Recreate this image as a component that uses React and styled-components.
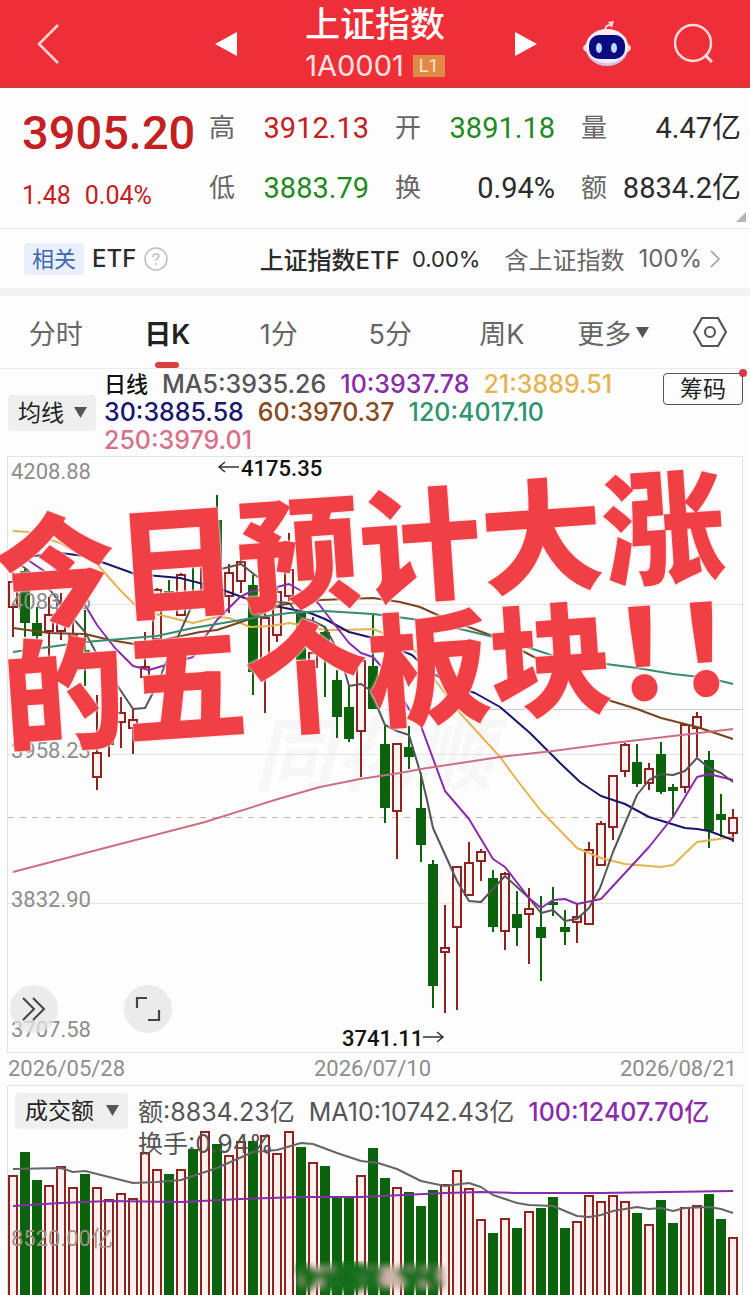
import React from 'react';
import styled, { createGlobalStyle } from 'styled-components';

const RED = '#8f2320';
const GREEN = '#0b640b';

const NUM = 'Roboto, "Noto Sans CJK SC", sans-serif';
const UI = 'Inter, "Noto Sans CJK SC", sans-serif';

const GlobalStyle = createGlobalStyle`
  * { box-sizing: border-box; }
  body {
    margin: 0;
    background: #fdfdfd;
    color: #2b2b2b;
    font-family: ${UI};
  }
  button, select {
    font: inherit;
    color: inherit;
    border: 0;
    background: none;
    padding: 0;
    margin: 0;
  }
  svg { display: block; }
`;

const Page = styled.main`
  width: 100%;
  overflow: hidden;
`;

const Header = styled.header`
  display: grid;
  grid-template-columns: 1fr 324px 1fr;
  align-items: center;
  height: 88px;
  background: #ef2f37;
  color: #fff;
  border-bottom: 1px solid #b8444a;
`;

const HeaderSide = styled.div`
  display: flex;
  align-items: center;
  justify-content: ${({ $end }) => ($end ? 'flex-end' : 'flex-start')};
  gap: 42px;
  padding: 0 34px;
`;

const Switcher = styled.div`
  display: flex;
  align-items: center;
  justify-content: space-between;
`;

const IconButton = styled.button`
  display: flex;
`;

const TitleBlock = styled.div`
  display: flex;
  flex-direction: column;
  align-items: center;
`;

const Title = styled.h1`
  margin: 0;
  font-size: 35px;
  font-weight: 500;
  line-height: 44px;
`;

const Code = styled.div`
  display: flex;
  align-items: center;
  gap: 9px;
  height: 40px;
  font-size: 29px;
  color: #ffe3e3;
`;

const Level = styled.span`
  width: 32px;
  height: 22px;
  background: #e08a46;
  color: #ffe9c9;
  font-family: ${NUM};
  font-size: 18px;
  line-height: 22px;
  text-align: center;
`;

const Quote = styled.section`
  position: relative;
  display: flex;
  height: 141px;
  padding: 10px 9px 10px 22px;
  border-bottom: 1px solid #ebebeb;
  font-family: ${NUM};
`;

const Price = styled.div`
  width: 187px;
  color: #c3201f;
`;

const Last = styled.div`
  height: 70px;
  font-size: 47px;
  font-weight: 500;
  line-height: 70px;
`;

const Change = styled.div`
  display: flex;
  gap: 14px;
  font-size: 25px;
  line-height: 56px;
`;

const Stats = styled.dl`
  flex: 1;
  display: grid;
  grid-template-columns: repeat(3, 160px);
  justify-content: space-between;
  margin: 0;
`;

const Stat = styled.div`
  display: flex;
  justify-content: space-between;
  align-items: center;
  height: 60px;
  white-space: nowrap;

  dt {
    font-size: 26px;
    line-height: 60px;
    color: #666;
  }
  dd {
    margin: 0;
    font-size: 29px;
    line-height: 58px;
    color: ${({ $color }) => $color};
  }
`;

const Corner = styled.span`
  position: absolute;
  right: 4px;
  bottom: 6px;
  border: solid transparent;
  border-width: 5px;
  border-right-color: #b5b5b5;
  border-bottom-color: #b5b5b5;
`;

const EtfBar = styled.a`
  display: flex;
  align-items: center;
  gap: 8px;
  height: 59px;
  padding: 0 30px 0 24px;
  color: #2b2b2b;
  font-size: 22px;
  text-decoration: none;
  white-space: nowrap;
`;

const Tag = styled.span`
  width: 60px;
  border-radius: 4px;
  background: #e9effb;
  color: #3d68ae;
  line-height: 32px;
  text-align: center;
`;

const EtfName = styled.strong`
  font-weight: 500;
  font-size: 24px;
`;

const Tail = styled.span`
  display: flex;
  align-items: center;
  gap: 12px;
  margin-left: auto;
`;

const Included = styled.span`
  display: flex;
  align-items: center;
  gap: 14px;
  margin-left: 12px;
  color: #666;
  font-size: 24px;
`;

const Divider = styled.div`
  height: 8px;
  background: #f3f3f3;
`;

const Tabs = styled.nav`
  display: grid;
  grid-template-columns: repeat(6, 1fr) 81px;
  height: 73px;
  border-bottom: 1px solid #ececec;
`;

const Tab = styled.button`
  position: relative;
  display: flex;
  align-items: center;
  justify-content: center;
  gap: 5px;
  font-size: 27px;
  font-weight: ${({ $active }) => ($active ? 600 : 400)};
  color: ${({ $active }) => ($active ? '#222' : '#666')};

  &::after {
    content: '';
    display: ${({ $active }) => ($active ? 'block' : 'none')};
    position: absolute;
    bottom: 0;
    width: 24px;
    height: 6px;
    border-radius: 3px;
    background: #d8403f;
  }
`;

const Indicators = styled.section`
  display: flex;
  align-items: flex-start;
  height: 87px;
  padding: 1px 7px 0 8px;
`;

const SelectBox = styled.label`
  position: relative;
  flex: none;
  width: ${({ $width }) => $width}px;
  height: 36px;
  margin-top: ${({ $top }) => $top}px;
  border-radius: 4px;
  background: #efefef;

  select {
    width: 100%;
    height: 36px;
    padding-left: 10px;
    appearance: none;
    font-size: 23px;
    color: #222;
  }
  svg {
    position: absolute;
    right: 9px;
    top: 12px;
    pointer-events: none;
  }
`;

const Legend = styled.div`
  flex: 1;
  display: flex;
  flex-wrap: wrap;
  column-gap: 14px;
  margin: 0 8px;
  font-size: 25px;
  font-weight: 500;
  line-height: 28px;
`;

const LegendItem = styled.span`
  color: ${({ $color }) => $color};
  font-weight: ${({ $strong }) => ($strong ? 500 : 'inherit')};
  white-space: nowrap;
`;

const LegendTitle = styled.strong`
  color: #111;
  font-size: 22px;
  font-weight: 500;
`;

const ChipsButton = styled.button`
  position: relative;
  width: 80px;
  height: 32px;
  margin-top: 3px;
  border: 1px solid #555;
  border-radius: 4px;
  color: #222;
  font-size: 23px;
  line-height: 28px;

  &::after {
    content: '';
    position: absolute;
    top: -5px;
    right: -5px;
    width: 8px;
    height: 8px;
    border-radius: 50%;
    background: #d23b48;
  }
`;

const Panel = styled.section`
  position: relative;
  margin: 0 7px;

  > svg {
    width: 100%;
    height: auto;
  }
`;

const Headline = styled.div`
  position: absolute;
  left: -10px;
  top: 24px;
  color: #f04045;
  font-family: "Noto Sans CJK SC", sans-serif;
  font-size: 122px;
  font-weight: 900;
  line-height: 124px;
  white-space: nowrap;
  transform: rotate(-4deg);
  text-shadow: 0 0 3px #ffe4e4, 0 0 3px #ffe4e4;
`;

const HeadlineRow = styled.div`
  display: flex;
`;

const Bang = styled.span`
  width: 62px;
  text-align: center;
`;

const RoundButton = styled.button`
  position: absolute;
  left: ${({ $left }) => $left}px;
  bottom: 20px;
  width: 48px;
  height: 48px;
  border-radius: 50%;
  background: rgba(228, 228, 228, 0.75);
  display: flex;
  align-items: center;
  justify-content: center;
`;

const Dates = styled.div`
  display: flex;
  justify-content: space-between;
  height: 32px;
  padding: 0 13px 0 8px;
  color: #8d8d8d;
  font-family: ${NUM};
  font-size: 22px;
  line-height: 32px;
`;

const VolumeHead = styled.div`
  position: absolute;
  left: 8px;
  right: 0;
  top: 0;
  display: flex;
`;

const VolumeLegend = styled(Legend)`
  padding-top: 11px;
  margin: 0 0 0 10px;
  line-height: 32px;
  font-weight: 400;
`;

// drawing units shared by both panes
const LEFT = 7;
const WIDTH = 736;
const xAt = (i) => 13 + i * 12;

// [up, high, body top, body bottom, low, volume top]
const candles = [
  [1, 572, 581, 608, 637, 1175],
  [0, 569, 571, 623, 637, 1152],
  [0, 607, 623, 636, 647, 1180],
  [1, 597, 614, 632, 663, 1185],
  [1, 593, 603, 632, 640, 1166],
  [1, 618, 634, 650, 668, 1187],
  [0, 610, 650, 658, 686, 1174],
  [1, 695, 752, 778, 790, 1187],
  [1, 700, 712, 745, 757, 1199],
  [1, 697, 712, 723, 748, 1193],
  [1, 708, 719, 729, 754, 1198],
  [1, 632, 666, 678, 694, 1152],
  [1, 588, 589, 640, 650, 1169],
  [0, 580, 591, 596, 602, 1174],
  [1, 573, 574, 616, 616, 1169],
  [0, 567, 591, 596, 600, 1149],
  [1, 508, 520, 590, 596, 1131],
  [0, 495, 520, 578, 590, 1144],
  [1, 564, 572, 597, 613, 1155],
  [1, 559, 561, 582, 593, 1141],
  [0, 575, 585, 672, 695, 1141],
  [1, 600, 617, 663, 713, 1135],
  [1, 588, 591, 636, 642, 1153],
  [1, 533, 569, 597, 601, 1131],
  [0, 605, 612, 660, 668, 1147],
  [1, 617, 652, 668, 672, 1162],
  [0, 628, 632, 642, 697, 1166],
  [0, 670, 680, 717, 738, 1196],
  [0, 685, 707, 739, 742, 1196],
  [1, 656, 660, 732, 777, 1175],
  [0, 613, 666, 709, 709, 1148],
  [0, 726, 744, 808, 823, 1178],
  [1, 743, 743, 812, 859, 1187],
  [0, 726, 747, 757, 769, 1192],
  [0, 773, 808, 845, 862, 1206],
  [0, 860, 864, 986, 1008, 1190],
  [1, 905, 947, 953, 1013, 1184],
  [1, 866, 866, 928, 1010, 1170],
  [1, 842, 862, 896, 896, 1188],
  [1, 849, 851, 862, 881, 1219],
  [0, 870, 878, 927, 932, 1233],
  [1, 872, 873, 932, 950, 1218],
  [0, 891, 914, 928, 946, 1228],
  [1, 888, 908, 915, 964, 1211],
  [0, 896, 927, 938, 981, 1208],
  [0, 887, 902, 905, 916, 1197],
  [0, 910, 927, 932, 945, 1228],
  [1, 904, 916, 923, 943, 1221],
  [1, 842, 849, 925, 925, 1195],
  [1, 821, 823, 866, 866, 1201],
  [1, 775, 775, 828, 840, 1195],
  [1, 743, 744, 772, 777, 1201],
  [0, 744, 762, 784, 787, 1213],
  [1, 763, 768, 784, 790, 1224],
  [0, 742, 754, 792, 794, 1200],
  [0, 784, 787, 791, 817, 1223],
  [1, 723, 724, 788, 793, 1207],
  [1, 712, 716, 729, 757, 1205],
  [0, 751, 760, 831, 848, 1194],
  [0, 794, 814, 820, 837, 1219],
  [1, 809, 817, 834, 842, 1237],
];

const averages = [
  ['#e3b44f', '13,531 28,532 60,543 97,564 120,590 140,610 160,615 193,623 217,617 229,618 250,627 270,626 290,623 325,630 345,630 373,629 400,640 420,655 435,680 460,713 480,735 500,757 517,780 541,811 577,848 601,858 625,864 661,867 673,865 697,842 733,837'],
  ['#17176e', '13,561 25,557 60,553 85,556 110,565 135,574 180,578 215,587 250,600 275,606 310,613 325,619 349,632 373,638 395,648 412,655 430,672 460,688 475,693 500,707 530,733 560,763 580,782 601,796 625,804 649,817 685,828 697,829 709,831 733,840'],
  ['#555', '13,560 25,568 50,590 70,615 85,632 100,660 113,679 133,709 145,708 157,685 165,665 181,630 190,610 202,588 217,570 241,564 255,575 265,582 277,602 289,603 301,618 313,621 325,627 340,655 349,686 361,684 370,690 385,725 397,731 409,735 421,775 427,800 433,828 457,881 469,901 481,902 505,876 517,887 529,898 541,913 553,910 565,921 577,919 589,908 600,888 613,852 637,795 649,780 661,774 673,775 685,771 697,758 709,768 721,773 733,782'],
  ['#8a2bab', '13,553 25,558 50,575 75,585 85,605 97,625 115,648 133,666 149,670 193,657 205,637 217,620 240,597 250,592 277,587 289,584 305,593 318,603 349,643 361,653 373,657 380,665 397,690 409,709 421,726 445,791 469,819 493,859 505,867 529,898 541,908 553,900 565,899 577,904 601,899 625,873 649,847 673,817 697,777 709,774 733,780'],
  ['#7a431f', '13,628 49,633 85,634 110,640 140,645 200,632 217,630 250,619 280,605 320,600 373,598 400,602 420,607 442,617 498,638 536,658 608,700 637,709 661,718 697,727 733,739'],
  ['#398a70', '13,652 49,647 85,642 121,639 157,636 193,628 229,622 253,618 289,613 325,611 373,614 420,620 460,629 498,638 533,649 560,658 606,664 637,668 673,674 709,678 733,684'],
  ['#cc6f86', '13,872 97,850 205,822 278,799 320,787 360,779 400,773 421,769 500,757 553,751 613,743 673,736 733,729'],
];

const volumeAverages = [
  ['#666', '13,1169 61,1168 73,1172 85,1171 97,1174 133,1183 157,1182 181,1180 217,1168 253,1152 277,1150 301,1143 313,1144 337,1153 361,1161 378,1163 397,1169 421,1181 445,1186 469,1183 481,1187 493,1195 517,1203 529,1205 553,1206 577,1216 589,1217 601,1215 613,1211 637,1207 649,1209 661,1208 673,1211 685,1208 709,1207 721,1209 733,1213'],
  ['#8a2bab', '13,1206 61,1203 109,1201 181,1202 241,1199 301,1197 361,1197 445,1193 481,1192 517,1193 601,1193 733,1191'],
];

const axis = [
  ['4208.88', 479],
  ['4083.55', 609],
  ['3958.23', 758],
  ['3832.90', 907],
  ['3707.58', 1037],
];

const stats = [
  ['高', '3912.13', '#c3201f'],
  ['开', '3891.18', '#1f8a1f'],
  ['量', '4.47亿', '#2b2b2b'],
  ['低', '3883.79', '#1f8a1f'],
  ['换', '0.94%', '#2b2b2b'],
  ['额', '8834.2亿', '#2b2b2b'],
];

const legend = [
  ['MA5:3935.26', '#555'],
  ['10:3937.78', '#8a2bab'],
  ['21:3889.51', '#e3b44f'],
  ['30:3885.58', '#17176e'],
  ['60:3970.37', '#8a4a1f'],
  ['120:4017.10', '#2f9470'],
  ['250:3979.01', '#d9708a'],
];

const tabs = ['分时', '日K', '1分', '5分', '周K'];

const Caret = () => (
  <svg width="13" height="11" viewBox="0 0 12 10" aria-hidden="true">
    <path d="M0 0h12L6 10z" fill="#555" />
  </svg>
);

const Robot = () => (
  <svg width="50" height="48" viewBox="0 0 50 48">
    <path d="M23 12c0-5 1-7 6-7" fill="none" stroke="#ffd9df" strokeWidth="2" />
    <path d="M26 2l6-1-2 7z" fill="#ffd9df" />
    <ellipse cx="25" cy="28" rx="24" ry="8" fill="#f1dfea" />
    <ellipse cx="25" cy="28" rx="21" ry="18" fill="#cfc8ee" />
    <ellipse cx="25" cy="26" rx="21" ry="17" fill="#f8eef5" />
    <rect x="7" y="15" width="36" height="24" rx="10" fill="#0a0a82" />
    <ellipse cx="17" cy="28" rx="3" ry="5" fill="#b9dcff" />
    <ellipse cx="32" cy="28" rx="3" ry="5" fill="#b9dcff" />
  </svg>
);

const Lines = ({ items }) =>
  items.map(([color, points]) => (
    <polyline key={color} points={points} fill="none" stroke={color} strokeWidth="2" strokeLinejoin="round" />
  ));

const Candle = ({ x, candle: [up, high, top, bottom, low] }) => (
  <g>
    <path d={`M${x} ${high}V${top}M${x} ${bottom}V${low}`} stroke={up ? RED : GREEN} strokeWidth="2" />
    {up ? (
      <rect x={x - 4} y={top + 1} width="8" height={bottom - top - 2} fill="#fff4f2" stroke={RED} strokeWidth="2" />
    ) : (
      <rect x={x - 5} y={top} width="10" height={bottom - top} fill={GREEN} />
    )}
  </g>
);

const PriceChart = () => (
  <svg viewBox={`${LEFT} 456 ${WIDTH} 597`} role="img" aria-label="日K线">
    <text x="254" y="784" fontSize="80" fontWeight="700" fontStyle="italic" fontFamily="Noto Sans CJK SC" fill="#f7f7f7">同花顺</text>
    <rect x="7.5" y="456.5" width="735" height="596" fill="none" stroke="#e2e2e2" />
    <path d="M8 604.5h734M8 754.5h734M8 903.5h734" stroke="#e4e4e4" />
    <path d="M385 709.5h357" stroke="#c9c9c9" />
    <path d="M8 817.5h734" stroke="#c3b9a6" strokeDasharray="6 6" />
    {candles.map((c, i) => (
      <Candle key={i} x={xAt(i)} candle={c} />
    ))}
    <Lines items={averages} />
    <g fontFamily="Roboto" fontSize="22" fill="#8d8d8d">
      {axis.map(([label, y]) => (
        <text key={label} x="11" y={y}>{label}</text>
      ))}
    </g>
    <g fontFamily="Roboto" fontSize="22" fontWeight="500" fill="#111">
      <text x="241" y="476">4175.35</text>
      <text x="342" y="1046">3741.11</text>
    </g>
    <path d="M239 467h-20m6-5l-6 5 6 5M423 1037h20m-6-5l6 5-6 5" fill="none" stroke="#333" strokeWidth="1.5" />
  </svg>
);

const VolumeChart = () => (
  <svg viewBox={`${LEFT} 1085 ${WIDTH} 210`} role="img" aria-label="成交额">
    <defs>
      <filter id="smudge" x="-5%" y="-20%" width="110%" height="140%">
        <feGaussianBlur stdDeviation="3" />
      </filter>
    </defs>
    <path d="M7.5 1295V1085.5h735V1295" fill="none" stroke="#e2e2e2" />
    {candles.map(([up, , , , , top], i) =>
      up ? (
        <rect key={i} x={xAt(i) - 4} y={top + 1} width="8" height="180" fill="#fff0ed" stroke={RED} strokeWidth="2" />
      ) : (
        <rect key={i} x={xAt(i) - 5} y={top} width="10" height="180" fill={GREEN} />
      )
    )}
    <g filter="url(#smudge)">
      <rect x="299" y="1266" width="146" height="22" fill="#cbb3a9" />
      <path d="M298 1266l16 10-10 14M322 1270l10 12-8 6M338 1268h18v18h-18zM362 1266l18 24M380 1268l-16 20M400 1268l18 20M420 1266l-12 24M436 1266l-8 12 12 10" fill={GREEN} stroke="#17701c" strokeWidth="12" />
    </g>
    <Lines items={volumeAverages} />
    <text x="11" y="1246" fontFamily="Roboto, Noto Sans CJK SC" fontSize="22" fill="#9d9088">8520.00亿</text>
  </svg>
);

const App = () => (
  <Page>
    <GlobalStyle />
    <Header>
      <HeaderSide>
        <IconButton aria-label="返回">
          <svg width="26" height="40" viewBox="0 0 26 40">
            <path d="M24 1L5 20l19 19" fill="none" stroke="#ffd6d6" strokeWidth="2.5" />
          </svg>
        </IconButton>
      </HeaderSide>
      <Switcher>
        <IconButton aria-label="上一个">
          <svg width="24" height="26" viewBox="0 0 24 26"><path d="M24 1v24L2 13z" fill="#fff" /></svg>
        </IconButton>
        <TitleBlock>
          <Title>上证指数</Title>
          <Code>1A0001<Level>L1</Level></Code>
        </TitleBlock>
        <IconButton aria-label="下一个">
          <svg width="24" height="26" viewBox="0 0 24 26"><path d="M2 1v24l22-12z" fill="#fff" /></svg>
        </IconButton>
      </Switcher>
      <HeaderSide $end>
        <IconButton aria-label="智能助手"><Robot /></IconButton>
        <IconButton aria-label="搜索">
          <svg width="42" height="42" viewBox="0 0 42 42" fill="none" stroke="#ffdcdc" strokeWidth="2.5">
            <circle cx="19" cy="20" r="18" />
            <path d="M32 33l6 6" strokeWidth="3" />
          </svg>
        </IconButton>
      </HeaderSide>
    </Header>

    <Quote>
      <Price>
        <Last>3905.20</Last>
        <Change><span>1.48</span><span>0.04%</span></Change>
      </Price>
      <Stats>
        {stats.map(([name, value, color]) => (
          <Stat key={name} $color={color}>
            <dt>{name}</dt>
            <dd>{value}</dd>
          </Stat>
        ))}
      </Stats>
      <Corner />
    </Quote>

    <EtfBar href="#etf">
      <Tag>相关</Tag>
      <EtfName>ETF</EtfName>
      <svg width="24" height="24" viewBox="0 0 24 24" fill="none" stroke="#bdbdbd" strokeWidth="1.5">
        <circle cx="12" cy="12" r="11" />
        <path d="M9 10c0-4 6-4 6-1 0 2-3 2-3 5M12 16v2" />
      </svg>
      <Tail>
        <EtfName>上证指数ETF</EtfName>
        <span>0.00%</span>
        <Included>含上证指数 <span>100%</span></Included>
      </Tail>
      <svg width="10" height="18" viewBox="0 0 10 18">
        <path d="M1 1l8 8-8 8" fill="none" stroke="#999" strokeWidth="1.5" />
      </svg>
    </EtfBar>
    <Divider />

    <Tabs>
      {tabs.map((name) => (
        <Tab key={name} $active={name === '日K'}>{name}</Tab>
      ))}
      <Tab aria-haspopup="menu">更多<Caret /></Tab>
      <Tab aria-label="设置">
        <svg width="34" height="30" viewBox="0 0 34 30" fill="none" stroke="#555" strokeWidth="2.2">
          <path d="M9 1h16l8 14-8 14H9L1 15z" strokeLinejoin="round" />
          <circle cx="17" cy="15" r="5" />
        </svg>
      </Tab>
    </Tabs>

    <Indicators>
      <SelectBox $width={88} $top={25}>
        <select aria-label="主图指标" defaultValue="均线">
          <option>均线</option>
        </select>
        <Caret />
      </SelectBox>
      <Legend>
        <LegendTitle>日线</LegendTitle>
        {legend.map(([text, color]) => (
          <LegendItem key={text} $color={color}>{text}</LegendItem>
        ))}
      </Legend>
      <ChipsButton>筹码</ChipsButton>
    </Indicators>

    <Panel>
      <PriceChart />
      <Headline>
        <HeadlineRow>今日预计大涨</HeadlineRow>
        <HeadlineRow>的五个板块<Bang>!</Bang><Bang>!</Bang></HeadlineRow>
      </Headline>
      <RoundButton $left={3} aria-label="展开">
        <svg width="24" height="24" viewBox="0 0 24 24" fill="none" stroke="#444" strokeWidth="2">
          <path d="M1 1l11 11L1 23M11 1l11 11-11 11" />
        </svg>
      </RoundButton>
      <RoundButton $left={117} aria-label="全屏">
        <svg width="26" height="26" viewBox="0 0 26 26" fill="none" stroke="#444" strokeWidth="2.2">
          <path d="M2 12V2h10M24 14v10H13" />
        </svg>
      </RoundButton>
    </Panel>
    <Dates>
      <span>2026/05/28</span>
      <span>2026/07/10</span>
      <span>2026/08/21</span>
    </Dates>
    <Panel>
      <VolumeChart />
      <VolumeHead>
        <SelectBox $width={113} $top={8}>
          <select aria-label="副图指标" defaultValue="成交额">
            <option>成交额</option>
          </select>
          <Caret />
        </SelectBox>
        <VolumeLegend>
          <LegendItem $color="#555">额:8834.23亿</LegendItem>
          <LegendItem $color="#555">MA10:10742.43亿</LegendItem>
          <LegendItem $color="#8a2bab" $strong>100:12407.70亿</LegendItem>
          <LegendItem $color="#555">换手:0.94%</LegendItem>
        </VolumeLegend>
      </VolumeHead>
    </Panel>
  </Page>
);

export default App;
